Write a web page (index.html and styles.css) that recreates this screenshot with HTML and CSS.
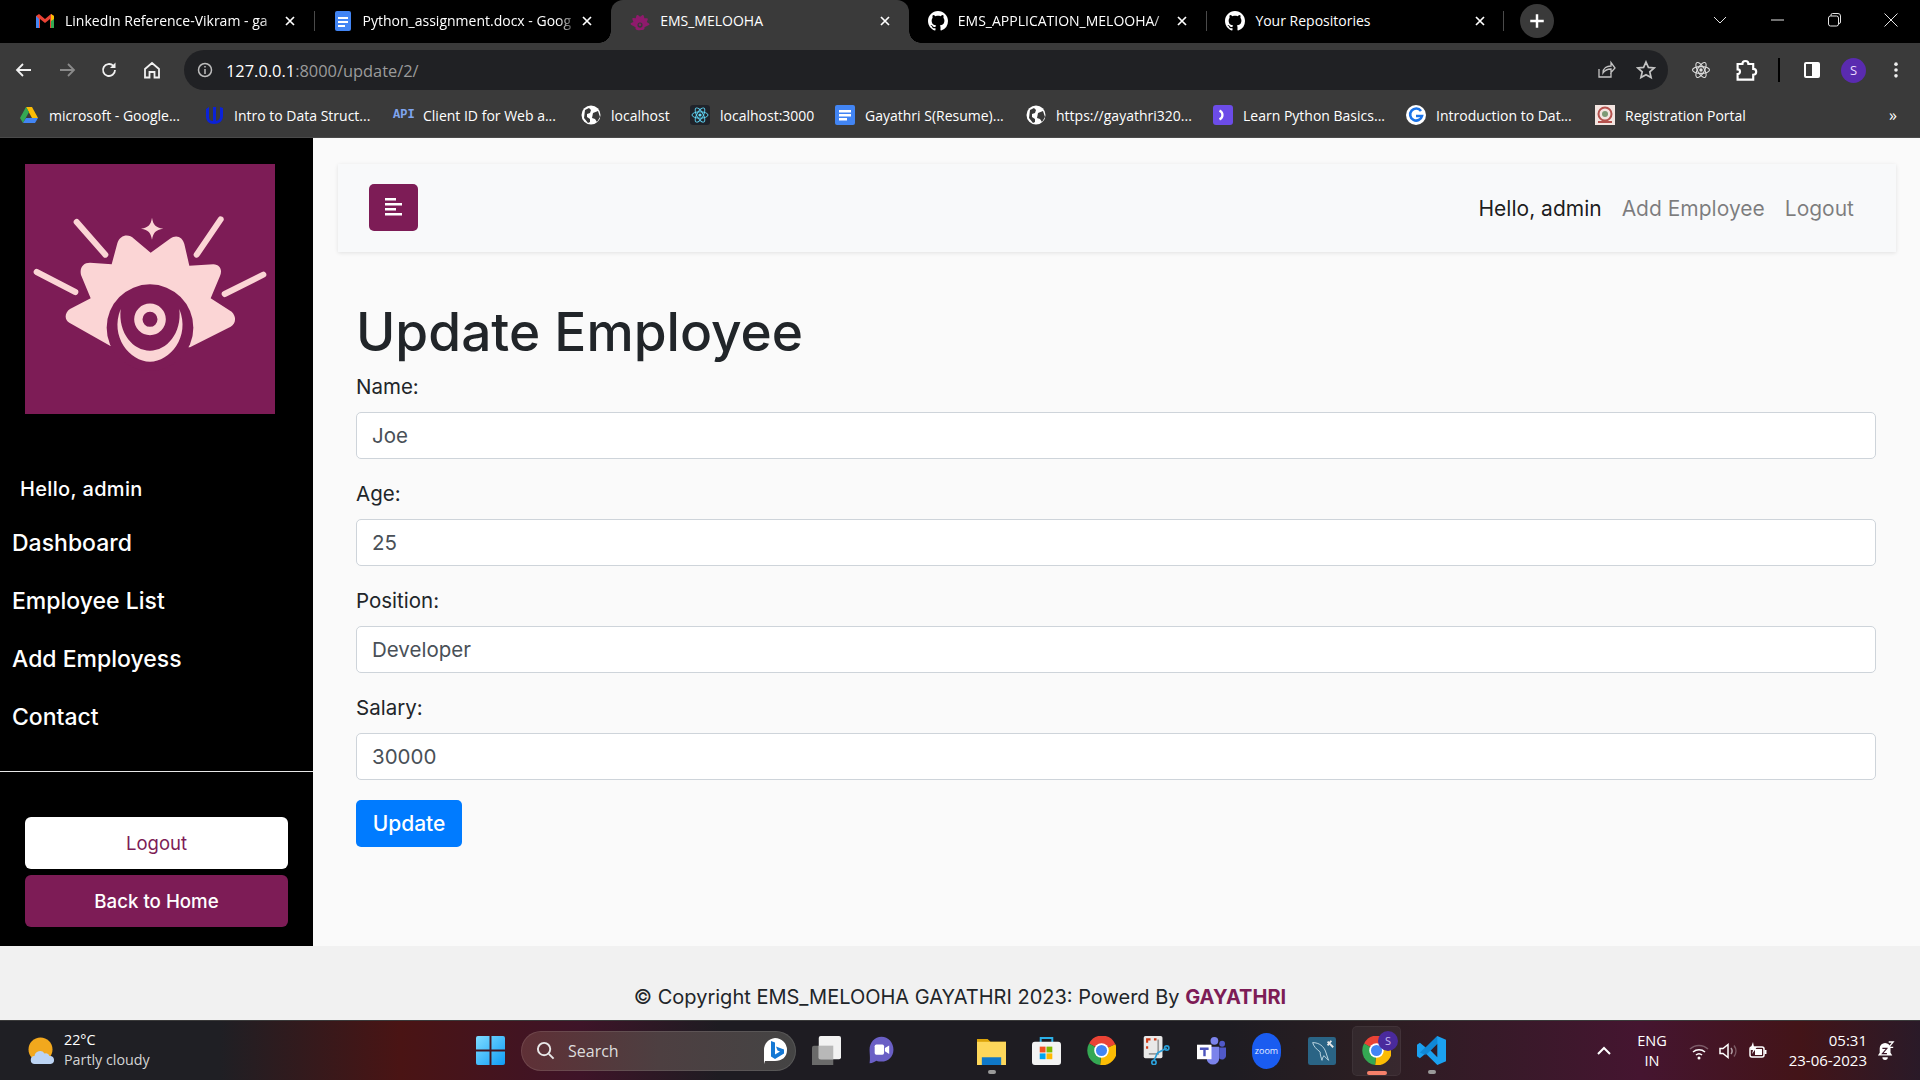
FILE: index.html
```html
<!DOCTYPE html>
<html lang="en">
<head>
<meta charset="utf-8">
<title>EMS_MELOOHA</title>
<link rel="stylesheet" href="styles.css">
</head>
<body>
<div class="screen">
  <header class="tabstrip">
    <div class="tab">
      <svg class="fav" viewBox="0 0 20 20"><path d="M1 17V5l3-2 6 5 6-5 3 2v12h-4V8l-5 4-5-4v9z" fill="#ea4335"/><path d="M1 5v12h3V8z" fill="#4285f4"/><path d="M19 5v12h-3V8z" fill="#34a853"/><path d="M16 3l3 2v3l-3 2z" fill="#fbbc04"/></svg>
      <span class="tab-title">LinkedIn Reference-Vikram - ga</span>
      <svg class="tab-x" viewBox="0 0 12 12"><path d="M2 2l8 8M10 2l-8 8"/></svg>
    </div>
    <div class="tab tab-sep">
      <svg class="fav" viewBox="0 0 20 20"><rect x="2" y="0" width="16" height="20" rx="2" fill="#4285f4"/><path d="M5 6h10v2H5zM5 10h10v2H5zM5 14h7v2H5z" fill="#fff"/></svg>
      <span class="tab-title">Python_assignment.docx - Goog</span>
      <svg class="tab-x" viewBox="0 0 12 12"><path d="M2 2l8 8M10 2l-8 8"/></svg>
    </div>
    <div class="tab tab-active">
      <svg class="fav" viewBox="180 210 540 480"><g fill="#8f1a6c"><path d="M330 617L208 548C192 538 194 518 210 507L272 475L243 405C238 382 250 368 270 368L335 373L352 310C360 285 385 280 402 296L452 338L510 296C530 282 548 292 553 312L568 377L640 373C660 374 668 390 660 408L632 475L695 515C710 530 708 550 692 560L570 622C590 690 520 700 450 700C380 700 310 690 330 617Z"/></g><circle cx="450" cy="560" r="70" fill="#3a3a3a"/><circle cx="450" cy="550" r="34" fill="#8f1a6c"/></svg>
      <span class="tab-title">EMS_MELOOHA</span>
      <svg class="tab-x" viewBox="0 0 12 12"><path d="M2 2l8 8M10 2l-8 8"/></svg>
    </div>
    <div class="tab">
      <svg class="fav" viewBox="0 0 16 16"><path fill="#fff" d="M8 0C3.58 0 0 3.58 0 8c0 3.54 2.29 6.53 5.47 7.59.4.07.55-.17.55-.38 0-.19-.01-.82-.01-1.49-2.01.37-2.53-.49-2.69-.94-.09-.23-.48-.94-.82-1.13-.28-.15-.68-.52-.01-.53.63-.01 1.08.58 1.23.82.72 1.21 1.87.87 2.33.66.07-.52.28-.87.51-1.07-1.78-.2-3.64-.89-3.64-3.95 0-.87.31-1.59.82-2.15-.08-.2-.36-1.02.08-2.12 0 0 .67-.21 2.2.82.64-.18 1.32-.27 2-.27s1.36.09 2 .27c1.53-1.04 2.2-.82 2.2-.82.44 1.1.16 1.92.08 2.12.51.56.82 1.27.82 2.15 0 3.07-1.87 3.75-3.65 3.95.29.25.54.73.54 1.48 0 1.07-.01 1.93-.01 2.2 0 .21.15.46.55.38A8.01 8.01 0 0 0 16 8c0-4.42-3.58-8-8-8z"/></svg>
      <span class="tab-title">EMS_APPLICATION_MELOOHA/</span>
      <svg class="tab-x" viewBox="0 0 12 12"><path d="M2 2l8 8M10 2l-8 8"/></svg>
    </div>
    <div class="tab tab-sep tab-sep-end">
      <svg class="fav" viewBox="0 0 16 16"><path fill="#fff" d="M8 0C3.58 0 0 3.58 0 8c0 3.54 2.29 6.53 5.47 7.59.4.07.55-.17.55-.38 0-.19-.01-.82-.01-1.49-2.01.37-2.53-.49-2.69-.94-.09-.23-.48-.94-.82-1.13-.28-.15-.68-.52-.01-.53.63-.01 1.08.58 1.23.82.72 1.21 1.87.87 2.33.66.07-.52.28-.87.51-1.07-1.78-.2-3.64-.89-3.64-3.95 0-.87.31-1.59.82-2.15-.08-.2-.36-1.02.08-2.12 0 0 .67-.21 2.2.82.64-.18 1.32-.27 2-.27s1.36.09 2 .27c1.53-1.04 2.2-.82 2.2-.82.44 1.1.16 1.92.08 2.12.51.56.82 1.27.82 2.15 0 3.07-1.87 3.75-3.65 3.95.29.25.54.73.54 1.48 0 1.07-.01 1.93-.01 2.2 0 .21.15.46.55.38A8.01 8.01 0 0 0 16 8c0-4.42-3.58-8-8-8z"/></svg>
      <span class="tab-title">Your Repositories</span>
      <svg class="tab-x" viewBox="0 0 12 12"><path d="M2 2l8 8M10 2l-8 8"/></svg>
    </div>
    <div class="new-tab"><svg viewBox="0 0 16 16"><path d="M8 2v12M2 8h12"/></svg></div>
    <div class="win-controls">
      <svg class="win-ic" viewBox="0 0 16 16"><path d="M2 5l6 6 6-6"/></svg>
      <svg class="win-ic" viewBox="0 0 16 16"><path d="M2 8h13"/></svg>
      <svg class="win-ic" viewBox="0 0 16 16"><rect x="2.5" y="4" width="10" height="10" rx="2"/><path d="M5 4V3a1.5 1.5 0 0 1 1.5-1.5H12A2.5 2.5 0 0 1 14.500 4v6A1.500 1.500 0 0 1 13 11.500"/></svg>
      <svg class="win-ic" viewBox="0 0 16 16"><path d="M1.500 1.500l13 13M14.500 1.500l-13 13"/></svg>
    </div>
  </header>

  <nav class="toolbar">
    <div class="nav-icons">
      <svg class="tb-ic" viewBox="0 0 20 20"><path d="M17 10H3M9 4l-6 6 6 6"/></svg>
      <svg class="tb-ic tb-dim" viewBox="0 0 20 20"><path d="M3 10h14M11 4l6 6-6 6"/></svg>
      <svg class="tb-ic" viewBox="0 0 20 20"><path d="M16 10a6 6 0 1 1-1.800-4.300"/><path class="solid" d="M16.500 2.500v5.500H11z"/></svg>
      <svg class="tb-ic" viewBox="0 0 20 20"><path d="M3 9l7-6 7 6v8.500h-4.500V12h-5v5.500H3z"/></svg>
    </div>
    <div class="omnibox">
      <svg class="info" viewBox="0 0 16 16"><circle cx="8" cy="8" r="6.500"/><path d="M8 7v5M8 4v1.600"/></svg>
      <span class="url"><span class="url-host">127.0.0.1</span>:8000/update/2/</span>
      <svg class="omni-ic" viewBox="0 0 20 20"><path d="M3 9v8h12v-4"/><path d="M7 13c0-5 4-7 8-7V2.500L19 8l-4 4.500V9c-3 0-6 1-8 4z"/></svg>
      <svg class="omni-ic omni-star" viewBox="0 0 20 20"><path d="M10 2l2.400 5.400 5.800.6-4.400 3.900 1.300 5.700L10 14.700l-5.100 2.900 1.300-5.700L1.800 8l5.800-.6z"/></svg>
    </div>
    <div class="ext-icons">
      <svg class="ext react-ext" viewBox="0 0 20 20"><g fill="none" stroke="#ddd" stroke-width="1.100"><ellipse cx="10" cy="10" rx="8.500" ry="3.400"/><ellipse cx="10" cy="10" rx="8.500" ry="3.400" transform="rotate(60 10 10)"/><ellipse cx="10" cy="10" rx="8.500" ry="3.400" transform="rotate(120 10 10)"/></g><circle cx="10" cy="10" r="1.700" fill="#ddd"/></svg>
      <svg class="ext puzzle" viewBox="0 0 20 20"><path d="M3 5h4a2.500 2.500 0 0 1 5 0h4v4a2.500 2.500 0 0 1 0 5v4H3v-4.500a2 2 0 0 0 0-4z"/></svg>
      <span class="tb-divider"></span>
      <svg class="ext panel" viewBox="0 0 20 20"><rect x="2" y="2" width="16" height="16" rx="2" fill="#fff"/><rect x="4" y="4" width="6" height="12" fill="#3a3a3a"/></svg>
      <span class="avatar">S</span>
      <svg class="ext kebab" viewBox="0 0 20 20"><circle cx="10" cy="3.500" r="2"/><circle cx="10" cy="10" r="2"/><circle cx="10" cy="16.500" r="2"/></svg>
    </div>
  </nav>

  <div class="bookmarks">
    <a class="bm"><svg class="bm-ic" viewBox="0 0 20 20"><path d="M7 2h6l6 11h-6z" fill="#fbbc04"/><path d="M7 2L1 13l3 5 6-11z" fill="#34a853"/><path d="M4 18h12l3-5H7z" fill="#4285f4"/></svg><span>microsoft - Google...</span></a>
    <a class="bm"><svg class="bm-ic" viewBox="0 0 20 20"><path d="M2 4l3-2v10c0 3 2 4 4 4V2h3v14c3-1 4-2 4-5V2l3 1v8c0 5-4 8-9 8s-8-3-8-8z" fill="#0b22d8"/></svg><span>Intro to Data Struct...</span></a>
    <a class="bm"><span class="bm-api">API</span><span>Client ID for Web a...</span></a>
    <a class="bm"><svg class="bm-ic" viewBox="0 0 20 20"><circle cx="10" cy="10" r="9.500" fill="#fff"/><path d="M4 5l4-2 2 2-1 3-3 1v3l3 2v3l-2 1-4-5zM12 8l5-2 2 6-3 5-2-3-3-1z" fill="#3a3a3a"/></svg><span>localhost</span></a>
    <a class="bm"><svg class="bm-ic" viewBox="0 0 20 20"><rect width="20" height="20" rx="3" fill="#20232a"/><g fill="none" stroke="#61dafb" stroke-width=".9"><ellipse cx="10" cy="10" rx="8" ry="3.200"/><ellipse cx="10" cy="10" rx="8" ry="3.200" transform="rotate(60 10 10)"/><ellipse cx="10" cy="10" rx="8" ry="3.200" transform="rotate(120 10 10)"/></g><circle cx="10" cy="10" r="1.600" fill="#61dafb"/></svg><span>localhost:3000</span></a>
    <a class="bm"><svg class="bm-ic" viewBox="0 0 20 20"><rect width="20" height="20" rx="2" fill="#4285f4"/><path d="M4 5h12v2.400H4zM4 9h12v2.400H4zM4 13h8v2.400H4z" fill="#fff"/></svg><span>Gayathri S(Resume)...</span></a>
    <a class="bm"><svg class="bm-ic" viewBox="0 0 20 20"><circle cx="10" cy="10" r="9.500" fill="#fff"/><path d="M4 5l4-2 2 2-1 3-3 1v3l3 2v3l-2 1-4-5zM12 8l5-2 2 6-3 5-2-3-3-1z" fill="#3a3a3a"/></svg><span>https://gayathri320...</span></a>
    <a class="bm"><svg class="bm-ic" viewBox="0 0 20 20"><rect width="20" height="20" rx="3" fill="#6c4ce8"/><path d="M7 4.500a6 6 0 0 1 0 11l-1-2.200a3.500 3.500 0 0 0 0-6.600z" fill="#fff"/></svg><span>Learn Python Basics...</span></a>
    <a class="bm"><svg class="bm-ic" viewBox="0 0 20 20"><circle cx="10" cy="10" r="10" fill="#fff"/><path d="M15 6a6 6 0 1 0 1 5h-6" fill="none" stroke="#1a73e8" stroke-width="2.600"/></svg><span>Introduction to Dat...</span></a>
    <a class="bm"><svg class="bm-ic" viewBox="0 0 20 20"><rect width="20" height="20" fill="#f3e4e0"/><circle cx="10" cy="9" r="6.500" fill="none" stroke="#b5524e" stroke-width="2"/><circle cx="10" cy="9" r="3" fill="#7d9a76"/><rect x="3" y="16" width="14" height="2" fill="#b5524e"/></svg><span>Registration Portal</span></a>
    <span class="bm-more">»</span>
  </div>

  <div class="page">
    <aside class="sidebar">
      <svg class="logo" viewBox="75 72 750 750" role="img" aria-label="EMS Melooha logo">
        <rect x="75" y="72" width="750" height="750" fill="#7d1c56"/>
        <path d="M456 233C460 255 466 262 490 266C466 270 460 277 456 299C452 277 446 270 423 266C446 262 452 255 456 233Z" fill="#fbd5d5"/>
        <g stroke="#fbd5d5" stroke-width="18" stroke-linecap="round"><path d="M230 246L316 344M662 238L590 344M110 396L226 456M790 404L674 462"/></g>
        <path d="M330 617L208 548C192 538 194 518 210 507L272 475L243 405C238 382 250 368 270 368L335 373L352 310C360 285 385 280 402 296L452 338L510 296C530 282 548 292 553 312L568 377L640 373C660 374 668 390 660 408L632 475L695 515C710 530 708 550 692 560L570 622Z" fill="#fbd5d5"/>
        <circle cx="450" cy="563" r="130" fill="#7d1c56"/>
        <path d="M362 507C328 590 390 665 450 665C510 665 572 590 538 507C546 580 500 632 450 632C400 632 354 580 362 507Z" fill="#fbd5d5"/>
        <circle cx="450" cy="538" r="35" fill="none" stroke="#fbd5d5" stroke-width="25"/>
      </svg>
      <p class="greeting">Hello, admin</p>
      <ul class="side-menu">
        <li><a>Dashboard</a></li>
        <li><a>Employee List</a></li>
        <li><a>Add Employess</a></li>
        <li><a>Contact</a></li>
      </ul>
      <hr class="side-rule">
      <div class="side-actions">
        <a class="side-btn side-btn-light">Logout</a>
        <a class="side-btn side-btn-brand">Back to Home</a>
      </div>
    </aside>

    <main class="content">
      <div class="topbar">
        <button class="toggle" type="button" aria-label="Toggle sidebar">
          <svg viewBox="0 0 17 18"><path d="M0 0h11v2.500H0zM0 5h17v2.500H0zM0 10h11v2.500H0zM0 15h17v2.500H0z"/></svg>
        </button>
        <div class="top-links">
          <a class="top-link top-link-on">Hello, admin</a>
          <a class="top-link">Add Employee</a>
          <a class="top-link">Logout</a>
        </div>
      </div>
      <section class="form-wrap">
        <h1 class="title">Update Employee</h1>
        <form>
          <div class="field"><label class="field-label" for="n">Name:</label><input class="field-input" id="n" value="Joe"></div>
          <div class="field"><label class="field-label" for="a">Age:</label><input class="field-input" id="a" value="25"></div>
          <div class="field"><label class="field-label" for="p">Position:</label><input class="field-input" id="p" value="Developer"></div>
          <div class="field"><label class="field-label" for="s">Salary:</label><input class="field-input" id="s" value="30000"></div>
          <button class="submit" type="button">Update</button>
        </form>
      </section>
    </main>
  </div>

  <footer class="copyright">© Copyright EMS_MELOOHA GAYATHRI 2023: Powerd By <strong>GAYATHRI</strong></footer>

  <div class="taskbar">
    <div class="weather">
      <svg class="weather-ic" viewBox="0 0 28 28"><circle cx="12.500" cy="12.500" r="12" fill="#f2a81d"/><path d="M7 27a4 4 0 0 1-.5-8 5.500 5.500 0 0 1 10-2.500 4 4 0 0 1 5 2.500 4 4 0 0 1 1 8z" fill="#bcd4f4"/></svg>
      <div class="weather-text"><span class="w-temp">22°C</span><span class="w-desc">Partly cloudy</span></div>
    </div>
    <div class="start">
      <svg viewBox="0 0 30 30"><defs><linearGradient id="win" x1="0" y1="0" x2="1" y2="1"><stop offset="0" stop-color="#7fdcff"/><stop offset="1" stop-color="#0f9cf5"/></linearGradient></defs><path d="M0 2a2 2 0 0 1 2-2h12v14H0zM16 0h12a2 2 0 0 1 2 2v12H16zM0 16h14v14H2a2 2 0 0 1-2-2zM16 16h14v12a2 2 0 0 1-2 2H16z" fill="url(#win)"/></svg>
    </div>
    <div class="search">
      <svg class="search-ic" viewBox="0 0 20 20"><circle cx="8.500" cy="8.500" r="6.500"/><path d="M13.500 13.500l5 5"/></svg>
      <span class="search-text">Search</span>
      <svg class="bing" viewBox="0 0 26 28"><path d="M13 1a12 12 0 0 1 12 12c0 7-5 11-12 11H3l-1 3V13A12 12 0 0 1 13 1z" fill="#fff"/><path d="M9 4l4 1.500v12l5-3-2.500-1-1.500-4 8 3v4l-9 5.500-4-2.500z" fill="#1478d4"/></svg>
    </div>
    <div class="cell"><svg class="cell-ic" viewBox="0 0 30 30"><rect x="0" y="10" width="22" height="22" rx="2" fill="#6a6a6a"/><rect x="7" y="0" width="23" height="24" rx="2" fill="#f2f2f2"/><rect x="7" y="10" width="15" height="14" fill="#b8b8b8"/></svg></div>
    <div class="cell"><svg class="cell-ic" viewBox="0 0 30 34"><path d="M15 1C7 1 1 8 1 16c0 5 1 9 0 16 4 0 6-2 8-3 2 1 4 1 6 1 8 0 14-6 14-14S23 1 15 1z" fill="#6a5fc5"/><rect x="7" y="10" width="11" height="12" rx="2" fill="#fff"/><path d="M19 14l5-3v10l-5-3z" fill="#fff"/></svg></div>
    <div class="cell cell-empty"></div>
    <div class="cell cell-open"><svg class="cell-ic" viewBox="0 0 30 30"><path d="M0 3h11l3 3h16v22H0z" fill="#dca40a"/><rect y="6" width="30" height="24" fill="#fdd75b"/><path d="M5 22h20v8H5z" fill="#0f78c8"/></svg></div>
    <div class="cell"><svg class="cell-ic" viewBox="0 0 30 30"><path d="M9 7V2h12v5" fill="none" stroke="#2bb0e8" stroke-width="2"/><rect y="6" width="30" height="24" rx="3" fill="#f3f3f3"/><rect x="8" y="11" width="6" height="6" fill="#f25022"/><rect x="15" y="11" width="6" height="6" fill="#7fba00"/><rect x="8" y="18" width="6" height="6" fill="#00a4ef"/><rect x="15" y="18" width="6" height="6" fill="#ffb900"/></svg></div>
    <div class="cell"><svg class="cell-ic" viewBox="3 3 42 42"><use href="#chrome" width="48" height="48"/></svg></div>
    <div class="cell"><svg class="cell-ic" viewBox="0 0 30 34"><rect x="0" y="0" width="22" height="26" rx="2" fill="#e9e9e9"/><path d="M4 8V4h4M12 4h3M4 12v3" fill="none" stroke="#d23a17" stroke-width="2.500"/><path d="M17 4v17H6" fill="none" stroke="#9a9a9a" stroke-width="2"/><path d="M16 20l11-6M16 20l-4 9" stroke="#2b9fd8" stroke-width="2" fill="none"/><circle cx="27" cy="14" r="2.500" fill="none" stroke="#2b9fd8" stroke-width="2"/><circle cx="12" cy="31" r="2.500" fill="none" stroke="#2b9fd8" stroke-width="2"/></svg></div>
    <div class="cell"><svg class="cell-ic" viewBox="0 0 30 30"><circle cx="18" cy="5" r="4" fill="#7b83eb"/><circle cx="26" cy="8" r="3" fill="#5059c9"/><path d="M10 11h13v12a6 6 0 0 1-13 0z" fill="#7b83eb"/><path d="M23 12h7v9a4 4 0 0 1-7 2z" fill="#5059c9"/><rect x="0" y="9" width="15" height="15" fill="#fff"/><path d="M3 12h9v2.500H9V21H6.500v-6.500H3z" fill="#4b53bc"/></svg></div>
    <div class="cell"><span class="zoom-ic">zoom</span></div>
    <div class="cell"><svg class="cell-ic cell-mysql" viewBox="0 0 30 30"><rect width="30" height="30" rx="2.500" fill="#2a6485"/><path d="M5 6c7 0 12 4 14 10l3 9-5-5c-1 2-2 3-2 5-1-3-2-6-2-9C9 13 6 10 5 6z" fill="none" stroke="#c4dbe6" stroke-width="1"/><path d="M21 5l6 6M25 4l-4 5" stroke="#e6e6e6" stroke-width="2"/></svg></div>
    <div class="cell cell-active"><svg class="cell-ic" viewBox="3 3 42 42"><use href="#chrome" width="48" height="48"/></svg><span class="chrome-badge">S</span></div>
    <div class="cell cell-open"><svg class="cell-ic" viewBox="0 0 30 30"><path d="M21 0l9 4v22l-9 4-12-12-6 5-3-2V9l3-2 6 5zM21 8l-7 7 7 7z" fill="#1ba1f0"/><path d="M21 0v8l-12 12-6-3 0 0 18-17z" fill="#0a78c4" opacity=".6"/></svg></div>
    <div class="tray">
      <svg class="tray-up" viewBox="0 0 14 10"><path d="M1 8l6-6 6 6"/></svg>
      <div class="lang">ENG<br>IN</div>
      <svg class="tray-ic" viewBox="0 0 20 20"><path class="faint" d="M1 8a13 13 0 0 1 18 0"/><path d="M4 11a9 9 0 0 1 12 0M7 14a4.500 4.500 0 0 1 6 0"/><circle class="solid-w" cx="10" cy="17" r="1.500"/></svg>
      <svg class="tray-ic" viewBox="0 0 20 20"><path d="M2 7.500h3l5-4v13l-5-4H2z"/><path class="soft" d="M13 7a5 5 0 0 1 0 6"/><path class="faint" d="M16 4.500a9 9 0 0 1 0 11"/></svg>
      <svg class="tray-ic" viewBox="0 0 20 20"><rect x="3" y="6" width="14" height="10" rx="2"/><path class="solid-w" d="M6 1L3 9h3l-1 4 5-7H7z"/><rect class="solid-w" x="8" y="8" width="7" height="6"/><rect class="solid-w" x="17.500" y="9" width="2" height="4"/></svg>
      <div class="clock"><span>05:31</span><span>23-06-2023</span></div>
      <svg class="bell" viewBox="0 0 20 22"><path d="M9 2a6 6 0 0 0-6 6v5l-2 3h16l-2-3V8a6 6 0 0 0-6-6z" fill="#fff"/><path d="M6 18h6a3 3 0 0 1-6 0z" fill="#fff"/><path d="M6 8h5l-5 6h5" fill="none" stroke="#3a1528" stroke-width="1.300"/><path d="M13 1h5l-5 6h5" fill="none" stroke="#fff" stroke-width="1.400"/></svg>
    </div>
  </div>
</div>

<svg class="sprite" aria-hidden="true">
  <symbol id="chrome" viewBox="0 0 48 48">
    <path d="M24 24L6 14A21 21 0 0 1 44 15z" fill="#ea4335"/>
    <path d="M24 24l20-9a21 21 0 0 1-22 30z" fill="#fbbc04"/>
    <path d="M24 24L22 45A21 21 0 0 1 6 14z" fill="#34a853"/>
    <circle cx="24" cy="24" r="10.500" fill="#fff"/>
    <circle cx="24" cy="24" r="8" fill="#4285f4"/>
  </symbol>
</svg>
</body>
</html>
```
FILE: styles.css
```css
* { box-sizing: border-box; }
html, body { margin: 0; padding: 0; height: 100%; overflow: hidden; }
body { font-family: Inter, "Open Sans", sans-serif; background: #fafafa; }
a { text-decoration: none; }
.sprite { display: none; }

.screen { display: flex; flex-direction: column; width: 1920px; height: 1080px; }

/* tab strip */
.tabstrip { display: flex; align-items: stretch; height: 43px; background: #000; padding-left: 16px; flex: none; font-family: "Open Sans", sans-serif; }
.tab { position: relative; display: flex; align-items: center; width: 297.6px; padding: 0 18px 2px 19px; color: #fff; font-size: 14px; }
.tab-sep::before { content: ""; position: absolute; left: 0; top: 11px; height: 20px; width: 1px; background: #4a4a4a; }
.tab-sep-end::after { content: ""; position: absolute; right: 0; top: 11px; height: 20px; width: 1px; background: #4a4a4a; }
.tab-active { background: #3a3a3a; border-radius: 12px 12px 0 0; }
.tab-active::before, .tab-active::after { content: ""; position: absolute; bottom: 0; width: 12px; height: 12px; background: radial-gradient(circle at var(--cx) 0, transparent 11.500px, #3a3a3a 12px); }
.tab-active::before { left: -12px; --cx: 0; }
.tab-active::after { right: -12px; --cx: 100%; }
.fav { width: 20px; height: 20px; flex: none; }
.tab-title { flex: 1; min-width: 0; margin-left: 10px; margin-right: 2px; white-space: nowrap; overflow: hidden; -webkit-mask-image: linear-gradient(90deg, #000 90%, transparent); mask-image: linear-gradient(90deg, #000 90%, transparent); }
.tab-active .tab-title, .tab-sep-end .tab-title { -webkit-mask-image: none; mask-image: none; }
.tab-x { width: 12px; height: 12px; flex: none; fill: none; stroke: #fff; stroke-width: 1.700; }
.new-tab { display: flex; align-items: center; justify-content: center; width: 34px; height: 34px; margin: 4px 0 0 16px; border-radius: 50%; background: #3a3a3a; }
.new-tab svg { width: 18px; height: 18px; fill: none; stroke: #fff; stroke-width: 2.200; }
.win-controls { display: flex; align-items: center; gap: 41px; margin-left: auto; padding-right: 21px; margin-top: -4px; }
.win-ic { width: 16px; height: 16px; fill: none; stroke: #e4e4e4; stroke-width: 1; }

/* toolbar */
.toolbar { display: flex; align-items: center; height: 54px; background: #3a3a3a; flex: none; padding-left: 14px; font-family: "Open Sans", sans-serif; }
.nav-icons { display: flex; gap: 22.5px; width: 170px; flex: none; }
.tb-ic { width: 20px; height: 20px; fill: none; stroke: #f1f1f1; stroke-width: 1.800; }
.tb-dim { stroke: #8a8a8a; }
.tb-ic .solid { fill: #f1f1f1; stroke: none; }
.omnibox { display: flex; align-items: center; width: 1484px; height: 40px; border-radius: 20px; background: #202124; padding: 0 12px 0 13px; flex: none; }
.info { width: 16px; height: 16px; fill: none; stroke: #bdbdbd; stroke-width: 1.500; flex: none; }
.url { margin-left: 13px; color: #9b9b9b; font-size: 16.400px; }
.url-host { color: #fff; }
.omni-ic { width: 20px; height: 20px; fill: none; stroke: #c4c4c4; stroke-width: 1.300; margin-left: auto; margin-right: 1px; }
.omni-star { margin-left: 19px; margin-right: 0; stroke-width: 1.700; }
.ext-icons { display: flex; align-items: center; flex: 1; padding-left: 23px; }
.ext { width: 20px; height: 20px; flex: none; }
.puzzle { margin-left: 23px; width: 24px; height: 24px; fill: none; stroke: #fff; stroke-width: 1.800; }
.tb-divider { width: 2px; height: 24px; background: #000; margin-left: 20px; }
.panel { margin-left: 22px; }
.avatar { display: flex; align-items: center; justify-content: center; width: 25px; height: 25px; margin-left: 19px; border-radius: 50%; background: #5a2bb0; color: #e9dcff; font-size: 13px; }
.kebab { margin-left: 21px; fill: #eee; width: 18px; height: 18px; }

/* bookmarks */
.bookmarks { display: grid; grid-template-columns: 185px 189px 188px 109px 145px 191px 187px 193px 189px 1fr auto; align-items: center; height: 41px; background: #3a3a3a; padding: 0 0 4px 19px; flex: none; color: #fff; font-family: "Open Sans", sans-serif; font-size: 14px; border-bottom: 1px solid #4a4a4a; }
.bm { display: flex; align-items: center; gap: 10px; white-space: nowrap; color: #fff; }
.bm-ic { width: 20px; height: 20px; flex: none; }
.bm-api { width: 20px; color: #7fa5f0; font: 700 12px "Liberation Mono", monospace; }
.bm-more { margin-right: 23px; font-size: 16px; }

/* page */
.page { display: flex; flex: 1; min-height: 0; }
.sidebar { width: 313px; flex: none; background: #000; color: #fff; padding-top: 26px; display: flex; flex-direction: column; }
.logo { display: block; width: 250px; height: 250px; margin-left: 25px; flex: none; }
.greeting { margin: 60px 0 10px 20px; font-size: 20px; line-height: 30px; font-weight: 500; letter-spacing: .35px; }
.side-menu { list-style: none; margin: 0; padding: 0 0 0 12px; }
.side-menu li { height: 58px; display: flex; align-items: center; }
.side-menu a { color: #fff; font-size: 23px; font-weight: 500; }
.side-rule { margin: 25px 0 45px; border: 0; height: 1px; background: #e8e8e8; width: 100%; }
.side-actions { display: flex; flex-direction: column; gap: 6px; margin-left: 25px; width: 263px; }
.side-btn { display: flex; align-items: center; justify-content: center; height: 52px; border-radius: 6px; font-size: 18.500px; }
.side-btn-light { background: #fff; color: #7d1c56; }
.side-btn-brand { background: #7d1c56; color: #fff; font-weight: 500; font-size: 18.700px; }

.content { flex: 1; min-width: 0; background: #fafafa; padding: 26px 24px 0 25px; }
.topbar { display: flex; align-items: center; justify-content: space-between; height: 88px; padding: 0 42px 0 31px; background: #f8f9fa; box-shadow: 0 1px 4px rgba(0,0,0,.1); }
.toggle { display: flex; align-items: center; justify-content: center; width: 49px; height: 47px; margin-top: -2px; border: 0; padding: 0; border-radius: 5px; background: #7d1c56; }
.toggle svg { width: 17px; height: 18px; fill: #fff; }
.top-links { display: flex; gap: 20px; }
.top-link { font-size: 21px; color: rgba(0,0,0,.5); }
.top-link-on { color: rgba(0,0,0,.9); }

.form-wrap { padding: 45px 20px 0 18px; }
.title { margin: 0 0 5px; font-size: 53.200px; line-height: 70px; font-weight: 500; color: #212529; }
.field { margin-bottom: 20px; }
.field-label { display: block; margin-bottom: 10px; font-size: 20.500px; line-height: 30px; color: #212529; }
.field-input { display: block; width: 100%; height: 47px; padding: 0 15px; border: 1px solid #ced4da; border-radius: 5px; background: #fff; color: #495057; font: 20.500px Inter, sans-serif; }
.submit { display: block; width: 106px; height: 47px; border: 0; padding: 0; border-radius: 5px; background: #007bff; color: #fff; font: 500 21px Inter, sans-serif; }

.copyright { height: 74px; flex: none; padding-top: 36px; background: #f1f1f1; text-align: center; font-size: 20px; line-height: 30px; color: #212529; }
.copyright strong { color: #7d1c56; font-weight: 700; }

/* taskbar */
.taskbar { display: flex; align-items: center; height: 60px; flex: none; padding-left: 28px; border-top: 1px solid #3a3a3a; color: #fff; font-family: "Open Sans", sans-serif;
  background: linear-gradient(90deg, #1f1f24 0, #1f1f24 220px, #4a1414 400px, #3e1428 580px, #1e1c22 720px, #1e1c22 1230px, #2b1e22 1370px, #451530 1640px, #431418 1800px, #2a1a28 1920px); }
.weather { display: flex; align-items: center; gap: 8px; width: 433px; flex: none; }
.weather-ic { width: 28px; height: 28px; }
.weather-text { display: flex; flex-direction: column; margin-top: -2px; font-size: 14.300px; line-height: 20px; }
.w-desc { color: #d4d4d4; }
.start { display: flex; justify-content: center; width: 58px; flex: none; }
.start svg { width: 29px; height: 29px; }
.search { display: flex; align-items: center; width: 275px; height: 40px; margin: 0 3px 0 2px; padding: 0 8px 0 15px; border-radius: 20px; flex: none; background: linear-gradient(90deg, #5f3036, #4d3f41 50%, #444 100%); box-shadow: inset 0 0 0 1px rgba(255,255,255,.1); }
.search-ic { width: 19px; height: 19px; fill: none; stroke: #e8e8e8; stroke-width: 2; }
.search-text { margin-left: 13px; font-size: 16px; color: #ddd; }
.bing { width: 26px; height: 28px; margin-left: auto; }
.cell { position: relative; display: flex; align-items: center; justify-content: center; width: 55px; height: 50px; flex: none; }
.cell-ic { width: 29px; height: 29px; }
.cell-mysql { width: 28px; height: 28px; }
.cell-open::after { content: ""; position: absolute; bottom: 2px; left: 24px; width: 8px; height: 4px; border-radius: 2px; background: #9a9a9a; }
.cell-active { background: rgba(255,255,255,.05); border-radius: 5px; box-shadow: inset 0 0 0 1px rgba(255,255,255,.05); width: 49px; margin: 0 3px; }
.cell-active::after { content: ""; position: absolute; bottom: 1px; left: 15px; width: 20px; height: 4px; border-radius: 2px; background: #f5806a; }
.chrome-badge { position: absolute; top: 5px; right: 3px; display: flex; align-items: center; justify-content: center; width: 20px; height: 20px; border-radius: 50%; background: #4a2a9c; color: #c8b8f0; font-size: 11px; }
.zoom-ic { display: flex; align-items: center; justify-content: center; width: 29px; height: 36px; border-radius: 50%/45%; background: #1a5cf0; color: #e6eeff; font-size: 9px; }
.tray { display: flex; align-items: center; flex: 1; padding-left: 138px; }
.tray-up { width: 14px; height: 10px; fill: none; stroke: #fff; stroke-width: 2; flex: none; }
.lang { width: 56px; margin-left: 13px; text-align: center; font-size: 14.500px; line-height: 20px; }
.tray-ic { width: 20px; height: 20px; fill: none; stroke: #fff; stroke-width: 1.500; margin-left: 9px; flex: none; }
.tray-ic .faint { stroke: rgba(255,255,255,.3); }
.tray-ic .soft { stroke: rgba(255,255,255,.6); }
.tray-ic .solid-w { fill: #fff; stroke: none; }
.clock { display: flex; flex-direction: column; align-items: flex-end; width: 100px; margin-top: -2px; font-size: 15px; line-height: 20px; }
.bell { width: 18px; height: 20px; margin-left: 10px; flex: none; }
```
